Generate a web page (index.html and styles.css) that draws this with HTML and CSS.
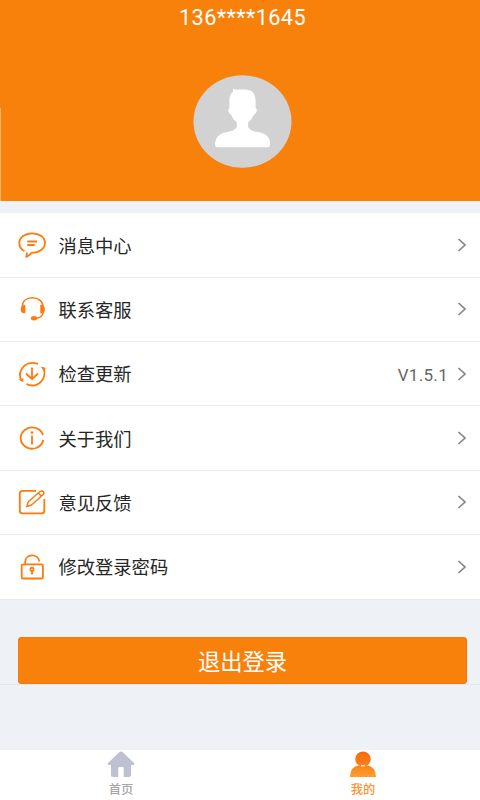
FILE: index.html
```html
<!DOCTYPE html>
<html lang="zh-CN">
<head>
<meta charset="utf-8">
<meta name="viewport" content="width=device-width, initial-scale=1">
<title>我的</title>
<link rel="stylesheet" href="styles.css">
</head>
<body>
<div class="app">
  <header class="profile">
    <div class="phone">136****1645</div>
    <svg class="avatar" viewBox="0 0 99 93">
      <ellipse cx="49.5" cy="46.500" rx="49" ry="46.200" fill="#d2d2d2"/>
      <path fill="#fff" d="M40 13.500Q42 15.200 46 14.600H52Q62.500 14.600 62.600 26V33Q64.600 34 63.400 37Q62.800 39 61.300 39.300Q59 44.500 55.200 47.500V52Q56.500 55.500 63 56.800Q76.500 58.500 77 67.500V70Q77 72.300 74.500 72.300H24.500Q22 72.300 22 70V67.500Q23 58.500 35.500 56.800Q42 55.500 43.800 52V47.500Q39.500 44 37.800 39.300Q36 39 35.500 36.500Q35 34 36.400 33V25Q36.400 19 40 17Z"/>
    </svg>
  </header>

  <main class="content">
    <ul class="menu">
      <li class="row">
        <svg class="icon" viewBox="0 0 32 32"><path d="M8.500 22.300C5 20.500 3.300 17.500 3.300 14C3.300 8.500 9 4.300 16.200 4.300S29 8.500 29 14S23.500 23.800 15.500 23.800Q13.500 26.500 10.300 27.900L11 23.500"/><path d="M11.300 12.500H21M11.300 16H18.700"/></svg>
        <span class="label">消息中心</span>
        <svg class="chevron" viewBox="0 0 10 16"><path d="M1.500 2L8 8L1.500 14"/></svg>
      </li>
      <li class="row">
        <svg class="icon" viewBox="0 0 32 32"><path class="thin" d="M6.300 14C6.300 8 10.500 4.800 16.300 4.800S27 8 27 14M27.500 18Q27 25 19 25.500"/><path class="solid" d="M9.300 12V20.300H7.700Q4.700 19.500 4.700 16.200T7.700 12ZM24.300 12V20.300H26Q28.900 19.500 28.900 16.200T26 12Z"/><ellipse class="solid" cx="18" cy="25.300" rx="3.100" ry="2.200"/></svg>
        <span class="label">联系客服</span>
        <svg class="chevron" viewBox="0 0 10 16"><path d="M1.500 2L8 8L1.500 14"/></svg>
      </li>
      <li class="row">
        <svg class="icon" viewBox="0 0 32 32"><path d="M5 22.200C1 11.500 10 2 22 5.800M10.500 26.200C22 31 31.800 20.500 27.300 9.700M16 9.500V20.800M10 15.500L16 21L22 15.500"/><path class="solid" d="M2.500 21.500L7.300 20.300V24.300ZM24.500 8.500L29.600 10L28.500 13.500Z"/></svg>
        <span class="label">检查更新</span>
        <span class="version">V1.5.1</span>
        <svg class="chevron" viewBox="0 0 10 16"><path d="M1.500 2L8 8L1.500 14"/></svg>
      </li>
      <li class="row">
        <svg class="icon" viewBox="0 0 32 32"><path d="M27 13A11.400 10.600 0 1 0 27.300 18M16 13.500V22.500"/><circle class="solid" cx="16" cy="10.600" r="1.300"/></svg>
        <span class="label">关于我们</span>
        <svg class="chevron" viewBox="0 0 10 16"><path d="M1.500 2L8 8L1.500 14"/></svg>
      </li>
      <li class="row">
        <svg class="icon" viewBox="0 0 32 32"><path d="M20 4.800H6.500Q3.800 4.800 3.800 7.500V24.700Q3.800 27.300 6.500 27.300H25.700Q28.300 27.300 28.300 24.700V13"/><path class="thin" d="M12.300 15.800L24.300 5.300Q26 4.300 27.500 5.800Q28.600 7.300 27.300 8.500L15.500 19L10.800 20.500ZM22.300 7L25.500 10.200"/></svg>
        <span class="label">意见反馈</span>
        <svg class="chevron" viewBox="0 0 10 16"><path d="M1.500 2L8 8L1.500 14"/></svg>
      </li>
      <li class="row">
        <svg class="icon" viewBox="0 0 32 32"><rect x="5.700" y="13.300" width="21.200" height="14.200" rx="1.300"/><path d="M9.200 13V11C9.500 2.500 21.500 2 23.500 10.500M16 19.500V23.500"/><circle cx="16" cy="18.200" r="1.600"/></svg>
        <span class="label">修改登录密码</span>
        <svg class="chevron" viewBox="0 0 10 16"><path d="M1.500 2L8 8L1.500 14"/></svg>
      </li>
    </ul>

    <div class="logout-area">
      <button class="logout" type="button">退出登录</button>
    </div>
  </main>

  <nav class="tabs">
    <a class="tab">
      <svg class="tab-icon" viewBox="0 0 28 27"><path fill="#bec2d0" d="M12.500.9Q14 0 15.500.9L27 12Q28 13.800 26.200 14H24V24Q24 26 22 26H16.700V17Q16.700 16 15.700 16H12.300Q11.300 16 11.300 17V26H6Q4 26 4 24V14H1.800Q0 13.800 1 12Z"/></svg>
      <span>首页</span>
    </a>
    <a class="tab active">
      <svg class="tab-icon" viewBox="0 0 28 27">
        <defs><linearGradient id="person" gradientUnits="userSpaceOnUse" x1="0" y1="0" x2="0" y2="26"><stop offset="0" stop-color="#f9690c"/><stop offset=".45" stop-color="#fa7c18"/><stop offset="1" stop-color="#fda02c"/></linearGradient></defs>
        <path fill="url(#person)" d="M.9 26Q1.300 15.500 10 14.300Q13.900 17 18 14.300Q26.500 15.500 27.100 26Z"/>
        <ellipse cx="14" cy="8" rx="7.800" ry="7.500" fill="url(#person)"/>
        <path d="M12 14.500H16" fill="none" stroke="#fff" stroke-opacity=".8"/>
      </svg>
      <span>我的</span>
    </a>
  </nav>
</div>
</body>
</html>
```

FILE: styles.css
```css
* {
  box-sizing: border-box;
}

body {
  margin: 0;
  font-family: Roboto, "Noto Sans CJK SC", sans-serif;
  background: #eef2f6;
}

.app {
  display: flex;
  flex-direction: column;
  height: 800px;
  overflow: hidden;
}

.profile {
  display: flex;
  flex-direction: column;
  align-items: center;
  height: 201px;
  padding: 5px 0 0 5px;
  background: linear-gradient(#fbb26a, #fbb26a) 0 108px / 1px 93px no-repeat #f8810b;
}

.phone {
  height: 26px;
  font-size: 21.7px;
  line-height: 26px;
  letter-spacing: 0.4px;
  color: #fff;
}

.avatar {
  width: 99px;
  height: 93px;
  margin-top: 44px;
}

.content {
  flex: 1;
  padding-top: 12.45px;
}

.menu {
  margin: 0;
  padding: 0;
  list-style: none;
  background: #fff;
}

.row {
  display: flex;
  align-items: center;
  height: 64.35px;
  padding: 0 13px 0 16px;
  border-bottom: 1px solid #e9eaec;
}

.icon {
  width: 32px;
  height: 32px;
  margin-right: 10.5px;
  fill: none;
  stroke: #ff7a0a;
  stroke-width: 1.8;
  stroke-linejoin: round;
}

.icon .solid {
  fill: #ff7a0a;
  stroke: none;
}

.icon .thin {
  stroke-width: 1.5;
}

.label {
  flex: 1;
  padding-top: 3px;
  font-size: 18.3px;
  line-height: 26px;
  color: #262626;
}

.version {
  padding-top: 2px;
  margin-right: 9px;
  font-size: 17px;
  letter-spacing: 0.3px;
  color: #666;
}

.chevron {
  width: 10px;
  height: 16px;
  fill: none;
  stroke: #858585;
  stroke-width: 1.7;
}

.logout-area {
  height: 85.45px;
  padding: 37.45px 13px 0 18px;
  border-bottom: 1px solid #e3e7eb;
}

.logout {
  display: block;
  width: 100%;
  height: 47px;
  padding: 0;
  border: 1px solid #f87805;
  border-radius: 3px;
  background: #f8810b;
  font: inherit;
  font-size: 22.3px;
  color: #fff;
}

.tabs {
  display: flex;
  height: 50px;
  padding: 1px 0 0 2px;
  background: #fff;
}

.tab {
  display: flex;
  flex: 1 1 0;
  flex-direction: column;
  align-items: center;
  padding-left: 2px;
  font-size: 12.3px;
  line-height: 18px;
  font-weight: 500;
  color: #a5a5a8;
}

.tab.active {
  padding-left: 8px;
  color: #fa9334;
}

.tab-icon {
  width: 28px;
  height: 27px;
  margin-bottom: 3px;
}
```
